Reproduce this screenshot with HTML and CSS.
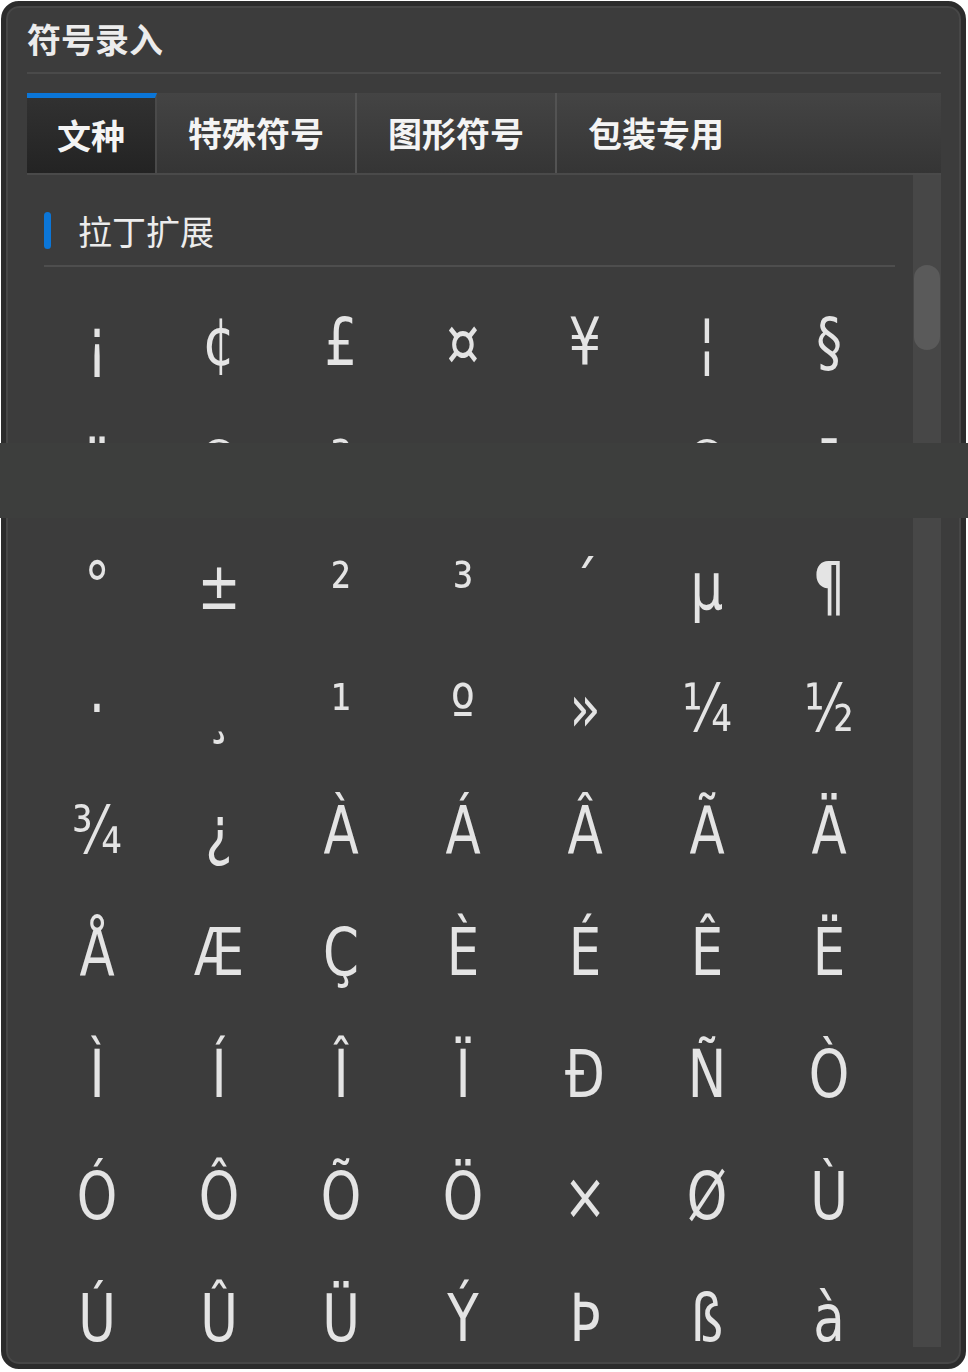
FILE: index.html
```html
<!DOCTYPE html>
<html lang="zh-CN">
<head>
    <meta charset="UTF-8">
    <meta name="viewport" content="width=device-width, initial-scale=1.0">
    <title>符号录入</title>
    <link rel="stylesheet" href="styles.css">
</head>
<body>

<div class="panel">
    <div class="title">符号录入</div>
    <div class="tabs">
        <div class="tab active">文种</div>
        <div class="tab">特殊符号</div>
        <div class="tab">图形符号</div>
        <div class="tab last">包装专用</div>
    </div>
    <div class="content">
        <div class="list">
            <div class="section-head">
                <span class="mark"></span>
                <span>拉丁扩展</span>
            </div>
            <div class="grid">
                <span class="cell">¡</span><span class="cell">¢</span><span class="cell">£</span><span class="cell">¤</span><span class="cell">¥</span><span class="cell">¦</span><span class="cell">§</span>
                <span class="cell">¨</span><span class="cell">©</span><span class="cell">ª</span><span class="cell">«</span><span class="cell">¬</span><span class="cell">®</span><span class="cell">¯</span>
                <span class="cell">°</span><span class="cell">±</span><span class="cell">²</span><span class="cell">³</span><span class="cell">´</span><span class="cell">µ</span><span class="cell">¶</span>
                <span class="cell">·</span><span class="cell">¸</span><span class="cell">¹</span><span class="cell">º</span><span class="cell">»</span><span class="cell">¼</span><span class="cell">½</span>
                <span class="cell">¾</span><span class="cell">¿</span><span class="cell">À</span><span class="cell">Á</span><span class="cell">Â</span><span class="cell">Ã</span><span class="cell">Ä</span>
                <span class="cell">Å</span><span class="cell">Æ</span><span class="cell">Ç</span><span class="cell">È</span><span class="cell">É</span><span class="cell">Ê</span><span class="cell">Ë</span>
                <span class="cell">Ì</span><span class="cell">Í</span><span class="cell">Î</span><span class="cell">Ï</span><span class="cell">Ð</span><span class="cell">Ñ</span><span class="cell">Ò</span>
                <span class="cell">Ó</span><span class="cell">Ô</span><span class="cell">Õ</span><span class="cell">Ö</span><span class="cell">×</span><span class="cell">Ø</span><span class="cell">Ù</span>
                <span class="cell">Ú</span><span class="cell">Û</span><span class="cell">Ü</span><span class="cell">Ý</span><span class="cell">Þ</span><span class="cell">ß</span><span class="cell">à</span>
            </div>
        </div>
        <div class="scrollbar">
            <div class="thumb"></div>
        </div>
    </div>
</div>

<!-- redraw strip left over from the window behind -->
<div class="strip"></div>

</body>
</html>
```

FILE: styles.css
```css
body {
    margin: 0;
    background: #fff;
    font-family: "Noto Sans CJK SC", "Noto Sans", sans-serif;
    color: #ececec;
}
.panel {
    box-sizing: border-box;
    width: 965px;
    height: 1368px;
    margin: 1px 0 0 1px;
    background: #3c3c3c;
    border: 5px solid #2c2c2c;
    border-radius: 18px;
    box-shadow: inset 0 0 0 2px #474747;
    padding: 0 20px 0 21px;
    display: flex;
    flex-direction: column;
    overflow: hidden;
}
.title {
    height: 68px;
    font-size: 34px;
    font-weight: bold;
    line-height: 62px;
    padding-top: 2px;
    box-sizing: border-box;
    border-bottom: 2px solid #4a4a4a;
}
.tabs {
    margin-top: 19px;
    height: 82px;
    display: flex;
    background: linear-gradient(#444444, #353535);
    border-bottom: 2px solid #4a4a4a;
    box-sizing: border-box;
}
.tab {
    padding: 0 31px;
    font-size: 34px;
    font-weight: bold;
    line-height: 80px;
    border-right: 2px solid #535353;
    box-sizing: border-box;
    color: #f4f4f4;
    white-space: nowrap;
}
.tab.active {
    padding: 0 30px;
    border-top: 5px solid #0b76d8;
    line-height: 74px;
    background: linear-gradient(#313131, #232323);
    border-right-color: #4a4a4a;
}
.tab.last {
    border-right: none;
}
.content {
    flex: 1;
    display: flex;
    min-height: 0;
    margin-bottom: 17px;
}
.list {
    flex: 1;
    overflow: hidden;
}
.section-head {
    display: flex;
    align-items: center;
    gap: 27px;
    margin: 0 18px 0 17px;
    height: 92px;
    padding-top: 20px;
    box-sizing: border-box;
    font-size: 34px;
    border-bottom: 2px solid #4e4e4e;
}
.mark {
    width: 7px;
    height: 37px;
    border-radius: 4px;
    background: #0b76d8;
}
.grid {
    display: grid;
    grid-template-columns: repeat(7, 122px);
    grid-auto-rows: 122px;
    margin: 14px 0 0 9px;
}
.cell {
    display: flex;
    align-items: center;
    justify-content: center;
    font-family: "DejaVu Sans", sans-serif;
    font-size: 66px;
    color: #e4e4e4;
    transform: scaleX(0.78);
}
.scrollbar {
    width: 28px;
    background: #474747;
    padding-top: 90px;
    box-sizing: border-box;
}
.thumb {
    height: 85px;
    margin: 0 1px;
    border-radius: 14px;
    background: #5a5a5a;
}
.strip {
    position: absolute;
    left: 0;
    top: 443px;
    width: 968px;
    height: 75px;
    background: #3d3e3d;
}
```
